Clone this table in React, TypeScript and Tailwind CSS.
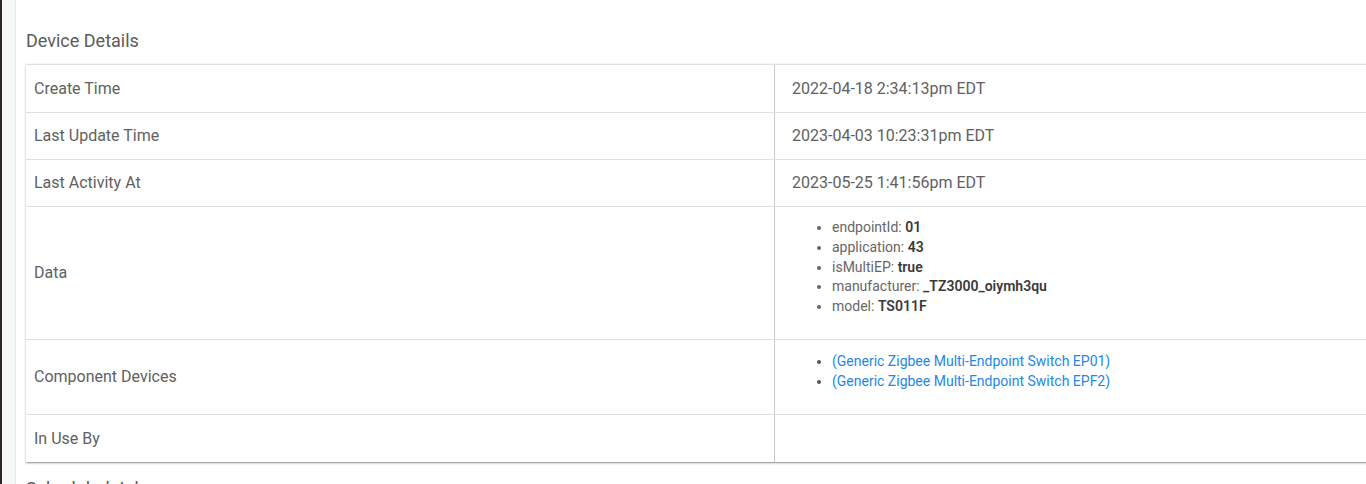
import React from "react";

const DATA_ITEMS = [
  { key: "endpointId", value: "01" },
  { key: "application", value: "43" },
  { key: "isMultiEP", value: "true" },
  { key: "manufacturer", value: "_TZ3000_oiymh3qu" },
  { key: "model", value: "TS011F" },
];

const CHILD_DEVICES = [
  "(Generic Zigbee Multi-Endpoint Switch EP01)",
  "(Generic Zigbee Multi-Endpoint Switch EPF2)",
];

function Row({
  label,
  height,
  top = false,
  last = false,
  children,
}: {
  label: string;
  height: string;
  top?: boolean;
  last?: boolean;
  children?: React.ReactNode;
}) {
  return (
    <div className={`flex ${height} ${last ? "" : "border-b border-[#e0e0e0]"}`}>
      <div className="w-[748px] shrink-0 flex items-center pl-[8px] text-[16px] text-[#616161]">
        {label}
      </div>
      <div
        className={`flex-1 border-l border-[#c8c8c8] flex ${
          top ? "items-start pt-[11px]" : "items-center"
        } pl-[17px] text-[16px] text-[#616161]`}
      >
        {children}
      </div>
    </div>
  );
}

export default function App() {
  return (
    <div
      className="flex h-[484px] w-[1366px] overflow-hidden bg-white"
      style={{ fontFamily: "Roboto, 'Liberation Sans', sans-serif" }}
    >
      <div className="w-[2px] shrink-0 bg-[#2e2522]" />
      <div className="w-[14px] shrink-0 bg-[#f7f7f7] border-r border-[#e6e6e6]" />
      <div className="flex-1 min-w-0 pl-[10px] pt-[29px]">
        <h2 className="text-[18px] leading-[24px] text-[#5c5c5c] mb-[11px]">
          Device Details
        </h2>
        <div className="w-[1500px] bg-white border-t border-[#e0e0e0] shadow-[0_1px_3px_rgba(0,0,0,0.2),0_1px_1px_rgba(0,0,0,0.14),0_2px_1px_-1px_rgba(0,0,0,0.12)]">
          <Row label="Create Time" height="h-[48px]">
            2022-04-18 2:34:13pm EDT
          </Row>
          <Row label="Last Update Time" height="h-[47px]">
            2023-04-03 10:23:31pm EDT
          </Row>
          <Row label="Last Activity At" height="h-[47px]">
            2023-05-25 1:41:56pm EDT
          </Row>
          <Row label="Data" height="h-[133px]" top>
            <ul className="list-disc pl-[40px] text-[14px] leading-[19.75px] text-[#666]">
              {DATA_ITEMS.map((d) => (
                <li key={d.key}>
                  {d.key}: <b className="font-semibold text-[#3a3a3a]">{d.value}</b>
                </li>
              ))}
            </ul>
          </Row>
          <Row label="Component Devices" height="h-[75px]" top>
            <ul className="list-disc pl-[40px] text-[14px] leading-[20px] text-[#555]">
              {CHILD_DEVICES.map((c) => (
                <li key={c}>
                  <a className="text-[#1e88e5]" href="#">
                    {c}
                  </a>
                </li>
              ))}
            </ul>
          </Row>
          <Row label="In Use By" height="h-[47px]" last />
        </div>
        <h2 className="mt-[15px] text-[18px] leading-[24px] text-[#5c5c5c]">
          Scheduled Jobs
        </h2>
      </div>
    </div>
  );
}
